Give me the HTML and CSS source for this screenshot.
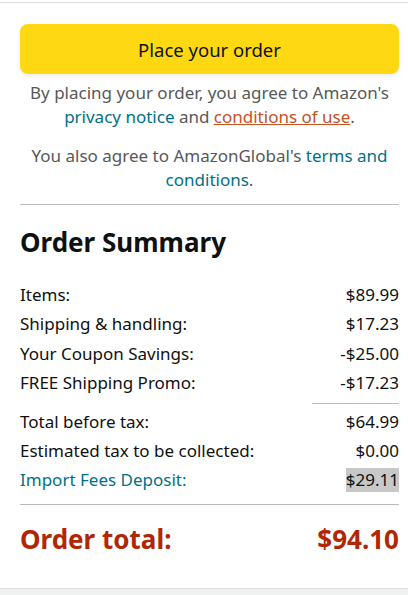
FILE: index.html
```html
<!DOCTYPE html>
<html>
<head>
    <title>Place your order</title>
    <link rel="stylesheet" href="styles.css">
</head>
<body>
    <div class="card">
        <button class="place-order">Place your order</button>
        <p class="legal">By placing your order, you agree to Amazon's <a href="#" class="link">privacy notice</a> and <a href="#" class="link visited">conditions of use</a>.</p>
        <p class="legal">You also agree to AmazonGlobal's <a href="#" class="link">terms and conditions</a>.</p>
        <hr class="divider">

        <h2>Order Summary</h2>
        <div class="rows">
            <div class="row"><span>Items:</span><span>$89.99</span></div>
            <div class="row"><span>Shipping &amp; handling:</span><span>$17.23</span></div>
            <div class="row"><span>Your Coupon Savings:</span><span>-$25.00</span></div>
            <div class="row"><span>FREE Shipping Promo:</span><span>-$17.23</span></div>
        </div>
        <hr class="divider short">
        <div class="rows last">
            <div class="row"><span>Total before tax:</span><span>$64.99</span></div>
            <div class="row"><span>Estimated tax to be collected:</span><span>$0.00</span></div>
            <div class="row"><a href="#" class="link">Import Fees Deposit:</a><span class="selected">$29.11</span></div>
        </div>
        <hr class="divider">
        <div class="row total"><span>Order total:</span><span>$94.10</span></div>
    </div>
</body>
</html>
```

FILE: styles.css
```css
html { background: #f0f2f2; }
body { margin: 0; padding-top: 2px; background: #fff; font-family: "Noto Sans", Arial, sans-serif; color: #0f1111; font-size: 17px; }
.card { background: #fff; border-top: 1px solid #ddd; border-bottom: 1px solid #ddd; padding: 21px 9px 33px 20px; }
.place-order { display: block; width: 100%; height: 50px; background: #ffd814; border: none; border-radius: 8px; font: inherit; font-size: 18.5px; color: #0f1111; box-shadow: 0 2px 5px rgba(213, 217, 217, .5); }
.legal { margin: 7px -4px 15px; text-align: center; color: #565959; font-size: 17px; line-height: 24px; }
.legal + .legal { margin-bottom: 12px; }
.link { color: #007185; text-decoration: none; }
.visited { color: #c7511f; text-decoration: underline; }
.divider { border: none; border-top: 1px solid #bbb; margin: 0; }
.divider.short { width: 87px; margin: 8px 0 6px auto; }
h2 { margin: 21px 0 25px; font-size: 26px; line-height: 32px; font-weight: 700; }
.rows { display: flex; flex-direction: column; gap: 5.3px; }
.rows.last { margin-bottom: 12px; }
.row { display: flex; justify-content: space-between; line-height: 24px; }
.selected { background: #c8c8c8; }
.total { margin-top: 18px; font-size: 26px; line-height: 32px; font-weight: 700; color: #b12704; }
```
